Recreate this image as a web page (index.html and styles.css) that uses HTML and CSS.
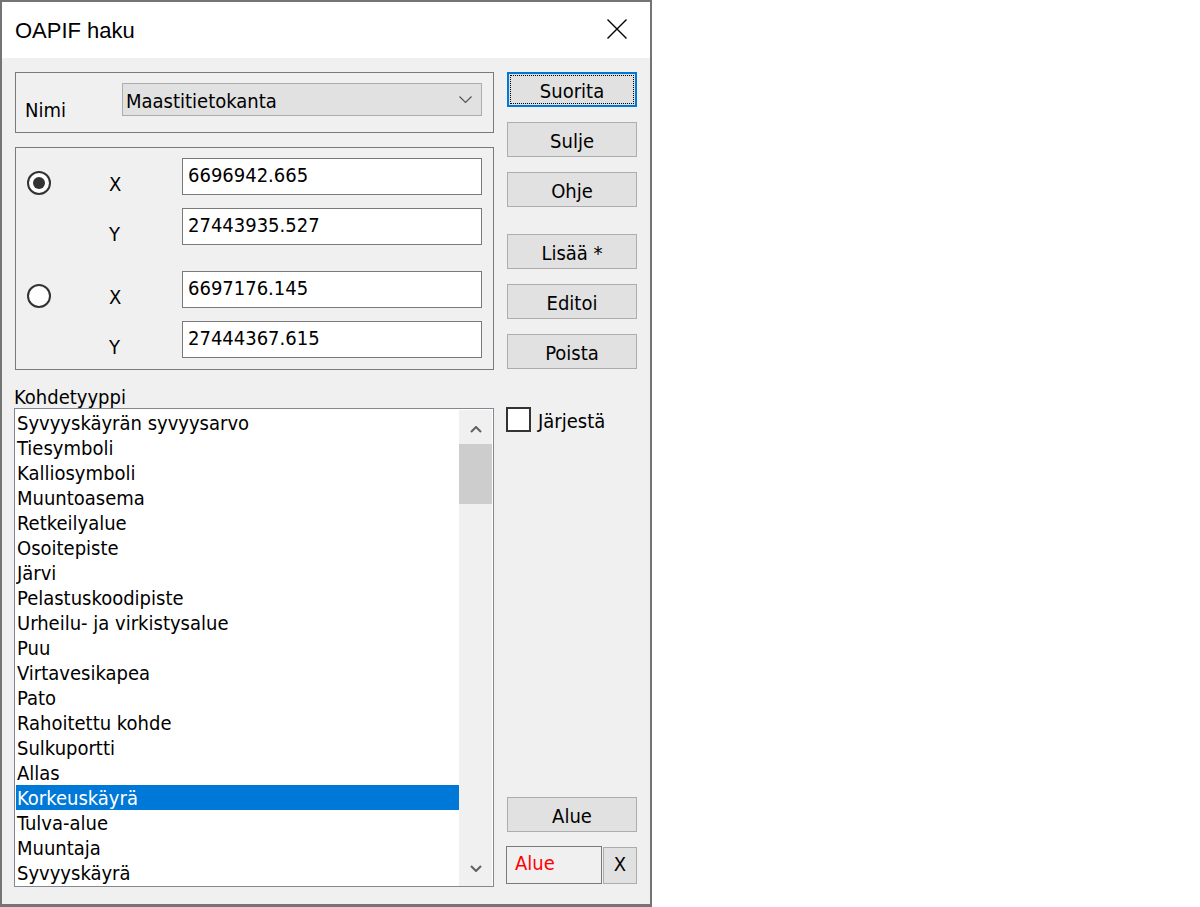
FILE: index.html
```html
<!DOCTYPE html>
<html lang="fi">

<head>
    <meta charset="UTF-8">
    <title>OAPIF haku</title>
    <link rel="stylesheet" href="styles.css">
</head>

<body>
    <div class="dialog">
        <!-- otsikkorivi -->
        <div class="titlebar">
            <span class="title">OAPIF haku</span>
            <svg class="close" width="20" height="20" viewBox="0 0 20 20">
                <path d="M0.5 0.5 L19.5 19.5 M19.5 0.5 L0.5 19.5" stroke="#000" stroke-width="1.4" fill="none" />
            </svg>
        </div>

        <div class="main">
            <div class="left">
                <!-- palvelu -->
                <div class="group group-name">
                    <span class="name-label">Nimi</span>
                    <div class="combo">
                        <span class="combo-text">Maastitietokanta</span>
                        <svg width="13" height="8" viewBox="0 0 13 8">
                            <path d="M0.5 0.5 L6.5 6.5 L12.5 0.5" stroke="#505050" stroke-width="1.1" fill="none" />
                        </svg>
                    </div>
                </div>

                <!-- koordinaatit -->
                <div class="group group-coords">
                    <div class="coord-row">
                        <span class="radio checked"></span>
                        <span class="axis">X</span>
                        <div class="edit">6696942.665</div>
                    </div>
                    <div class="coord-row">
                        <span class="radio-gap"></span>
                        <span class="axis">Y</span>
                        <div class="edit">27443935.527</div>
                    </div>
                    <div class="coord-row pair-start">
                        <span class="radio"></span>
                        <span class="axis">X</span>
                        <div class="edit">6697176.145</div>
                    </div>
                    <div class="coord-row">
                        <span class="radio-gap"></span>
                        <span class="axis">Y</span>
                        <div class="edit">27444367.615</div>
                    </div>
                </div>

                <div class="list-label">Kohdetyyppi</div>
                <div class="listbox">
                    <div class="items">
                        <div class="item">Syvyyskäyrän syvyysarvo</div>
                        <div class="item">Tiesymboli</div>
                        <div class="item">Kalliosymboli</div>
                        <div class="item">Muuntoasema</div>
                        <div class="item">Retkeilyalue</div>
                        <div class="item">Osoitepiste</div>
                        <div class="item">Järvi</div>
                        <div class="item">Pelastuskoodipiste</div>
                        <div class="item">Urheilu- ja virkistysalue</div>
                        <div class="item">Puu</div>
                        <div class="item">Virtavesikapea</div>
                        <div class="item">Pato</div>
                        <div class="item">Rahoitettu kohde</div>
                        <div class="item">Sulkuportti</div>
                        <div class="item">Allas</div>
                        <div class="item selected">Korkeuskäyrä</div>
                        <div class="item">Tulva-alue</div>
                        <div class="item">Muuntaja</div>
                        <div class="item">Syvyyskäyrä</div>
                    </div>
                    <div class="scrollbar">
                        <div class="sb-up">
                            <svg width="12" height="7" viewBox="0 0 12 7">
                                <path d="M1 6 L6 1 L11 6" stroke="#606060" stroke-width="2" fill="none" />
                            </svg>
                        </div>
                        <div class="sb-thumb"></div>
                        <div class="sb-down">
                            <svg width="12" height="7" viewBox="0 0 12 7">
                                <path d="M1 1 L6 6 L11 1" stroke="#606060" stroke-width="2" fill="none" />
                            </svg>
                        </div>
                    </div>
                </div>
            </div>

            <!-- painikkeet -->
            <div class="right">
                <div class="btn default">Suorita</div>
                <div class="btn">Sulje</div>
                <div class="btn">Ohje</div>
                <div class="btn btn-sep">Lisää *</div>
                <div class="btn">Editoi</div>
                <div class="btn">Poista</div>

                <div class="check">
                    <span class="check-box"></span>
                    <span class="check-text">Järjestä</span>
                </div>

                <div class="btn btn-area">Alue</div>
                <div class="area-row">
                    <div class="area-field">Alue</div>
                    <div class="btn btn-x">X</div>
                </div>
            </div>
        </div>
    </div>
</body>

</html>
```

FILE: styles.css
```css
* {
    box-sizing: border-box;
}

body {
    margin: 0;
    background: #fff;
    font-family: "DejaVu Sans Condensed", "Liberation Sans", Arial, sans-serif;
    font-size: 20px;
    color: #000;
}

.dialog {
    width: 652px;
    height: 907px;
    border: 2px solid #747474;
    border-bottom-width: 3px;
    background: #f0f0f0;
    display: flex;
    flex-direction: column;
}

/* otsikkorivi */
.titlebar {
    height: 56px;
    background: #fff;
    display: flex;
    align-items: flex-start;
    padding-left: 13px;
}

.title {
    flex: 1;
    font-family: "Liberation Sans", Arial, sans-serif;
    font-size: 22px;
    line-height: 58px;
}

.close {
    margin-top: 17px;
    margin-right: 23px;
}

.main {
    flex: 1;
    display: flex;
    gap: 13px;
    padding: 14px 13px 0 12px;
}

.left {
    width: 480px;
}

.group {
    border: 1px solid #7a7a7a;
    margin-left: 1px;
}

.group-name {
    height: 61px;
    display: flex;
    align-items: flex-start;
    padding: 10px 11px 16px 9px;
}

.name-label {
    width: 97px;
    line-height: 20px;
    margin-top: 17px;
}

.combo {
    width: 360px;
    height: 33px;
    border: 1px solid #adadad;
    background: #e1e1e1;
    display: flex;
    align-items: center;
    justify-content: space-between;
    padding: 2px 9px 0 3px;
}

.combo svg {
    margin-top: -2px;
}

.group-coords {
    height: 223px;
    margin-top: 14px;
    padding: 10px 11px 11px 11px;
}

.coord-row {
    display: flex;
    align-items: flex-start;
    height: 37px;
}

.coord-row + .coord-row {
    margin-top: 13px;
}

.coord-row.pair-start {
    margin-top: 26px;
}

.radio,
.radio-gap {
    width: 24px;
    height: 24px;
    flex: none;
}

.radio {
    margin-top: 13px;
    border: 2px solid #333;
    border-radius: 50%;
    background: #fff;
    display: flex;
    align-items: center;
    justify-content: center;
}

.radio.checked::after {
    content: "";
    width: 12px;
    height: 12px;
    border-radius: 50%;
    background: #333;
}

.axis {
    width: 73px;
    margin-left: 58px;
    margin-top: 16px;
    line-height: 20px;
}

.edit {
    width: 300px;
    height: 37px;
    border: 1px solid #7a7a7a;
    background: #fff;
    padding: 6px 5px 0;
    line-height: 20px;
}

.list-label {
    margin-top: 17px;
    margin-bottom: 1px;
    line-height: 20px;
}

/* luettelo */
.listbox {
    height: 479px;
    border: 1px solid #828790;
    background: #fff;
    padding: 1px 1px 0 1px;
    display: flex;
    overflow: hidden;
}

.items {
    width: 443px;
    height: 476px;
    overflow: hidden;
}

.item {
    height: 25px;
    line-height: 27px;
    padding-left: 1px;
    white-space: nowrap;
}

.item.selected {
    background: #0078d7;
    color: #fff;
}

.scrollbar {
    width: 33px;
    height: 476px;
    background: #f0f0f0;
    display: flex;
    flex-direction: column;
    align-items: center;
}

.sb-up,
.sb-down {
    height: 34px;
    width: 100%;
    display: flex;
    justify-content: center;
    align-items: flex-start;
}

.sb-up svg {
    margin-top: 16px;
}

.sb-down {
    margin-top: auto;
}

.sb-down svg {
    margin-top: 13px;
}

.sb-thumb {
    width: 100%;
    height: 60px;
    background: #cdcdcd;
}

/* painikkeet */
.right {
    width: 130px;
    display: flex;
    flex-direction: column;
    padding-bottom: 20px;
}

.btn {
    height: 35px;
    flex: none;
    border: 1px solid #adadad;
    background: #e1e1e1;
    display: flex;
    align-items: center;
    justify-content: center;
    padding-top: 2px;
}

.btn + .btn {
    margin-top: 15px;
}

.btn.btn-sep {
    margin-top: 27px;
}

.btn.default {
    border: 2px solid #0078d7;
    outline: 1px dotted #000;
    outline-offset: -4px;
}

.check {
    display: flex;
    align-items: center;
    margin-top: 38px;
    margin-left: -1px;
}

.check-box {
    width: 25px;
    height: 25px;
    border: 2px solid #333;
    background: #fff;
    margin-right: 7px;
}

.check-text {
    line-height: 20px;
    margin-top: 3px;
}

.btn.btn-area {
    margin-top: auto;
}

.area-row {
    display: flex;
    align-items: flex-end;
    margin-top: 14px;
    margin-left: -1px;
    gap: 1px;
}

.area-field {
    width: 96px;
    height: 38px;
    border: 1px solid #7a7a7a;
    background: #f0f0f0;
    color: #f00;
    padding: 6px 8px 0;
    line-height: 20px;
}

.area-row .btn.btn-x {
    width: 34px;
    height: 37px;
    margin-top: 0;
    padding-top: 0;
    padding-bottom: 3px;
}
```
